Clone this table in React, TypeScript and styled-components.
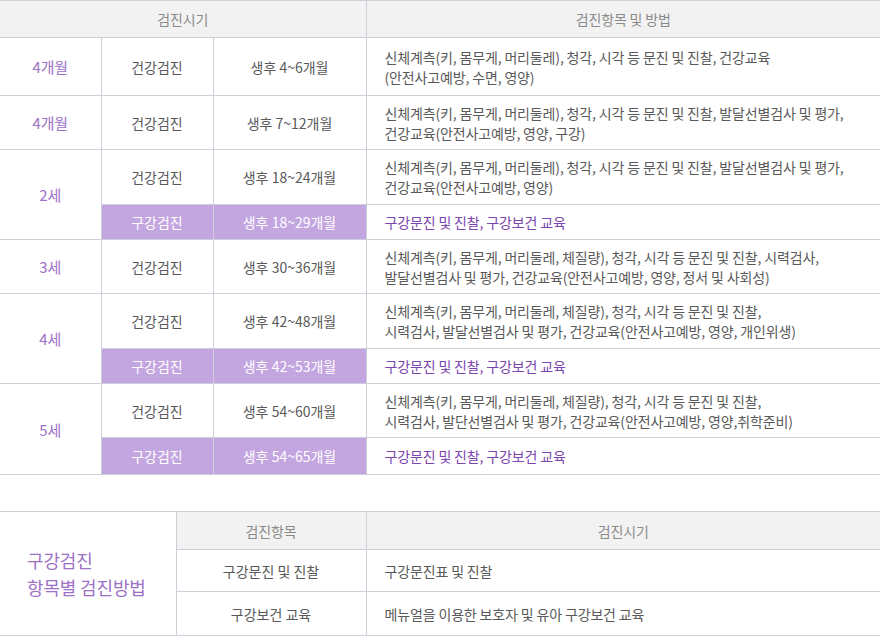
import React from 'react'
import styled, { createGlobalStyle } from 'styled-components'

const GlobalStyle = createGlobalStyle`
  html, body {
    margin: 0;
    padding: 0;
    background: #fff;
  }
  body {
    font-family: "Noto Sans CJK KR", "Noto Sans", sans-serif;
  }
`

const Page = styled.div`
  width: 880px;
  display: flex;
  flex-direction: column;
  gap: 36px;
`

const Table = styled.table`
  width: 100%;
  border-collapse: collapse;
  table-layout: fixed;
  font-size: 14px;
  letter-spacing: -0.15px;
  color: #595959;
  border-top: 1px solid #cfcfdb;
  border-bottom: 1px solid #cfcfdb;

  td, th {
    border: 1px solid #cfcfdb;
    padding: 0;
  }
  tr > :first-child {
    border-left: none;
  }
  tr > :last-child {
    border-right: none;
  }
`

const Head = styled.th<{ $h?: number }>`
  background: #f2f2f2;
  color: #8a8a8a;
  font-weight: 400;
  height: ${p => p.$h ?? 36}px;
  text-align: center;
`

const Row = styled.tr<{ $h: number }>`
  height: ${p => p.$h}px;
`

const Age = styled.td`
  color: #9d72c6;
  font-size: 15px;
  text-align: center;
`

const Cell = styled.td<{ $oral?: boolean }>`
  text-align: center;
  letter-spacing: 0;
  background: ${p => (p.$oral ? '#c3a5e0' : '#fff')};
  color: ${p => (p.$oral ? '#fff' : '#595959')};
`

const Desc = styled.td<{ $oral?: boolean }>`
  text-align: left;
  padding-left: 18px !important;
  line-height: 20px;
  color: ${p => (p.$oral ? '#7b45ae' : '#595959')};
`

const SideTitle = styled.td`
  color: #9d72c6;
  font-size: 18px;
  line-height: 27px;
  padding-left: 27px !important;
  text-align: left;
  vertical-align: middle;
`

type Health = { kind: string; period: string; desc: React.ReactNode; oral?: boolean; h: number }
type Group = { age: string; rows: Health[] }

const oralDesc = '구강문진 및 진찰, 구강보건 교육'

const groups: Group[] = [
  {
    age: '4개월',
    rows: [
      {
        kind: '건강검진', period: '생후 4~6개월', h: 58,
        desc: <>신체계측(키, 몸무게, 머리둘레), 청각, 시각 등 문진 및 진찰, 건강교육<br />(안전사고예방, 수면, 영양)</>,
      },
    ],
  },
  {
    age: '4개월',
    rows: [
      {
        kind: '건강검진', period: '생후 7~12개월', h: 54,
        desc: <>신체계측(키, 몸무게, 머리둘레), 청각, 시각 등 문진 및 진찰, 발달선별검사 및 평가,<br />건강교육(안전사고예방, 영양, 구강)</>,
      },
    ],
  },
  {
    age: '2세',
    rows: [
      {
        kind: '건강검진', period: '생후 18~24개월', h: 55,
        desc: <>신체계측(키, 몸무게, 머리둘레), 청각, 시각 등 문진 및 진찰, 발달선별검사 및 평가,<br />건강교육(안전사고예방, 영양)</>,
      },
      { kind: '구강검진', period: '생후 18~29개월', h: 35, oral: true, desc: oralDesc },
    ],
  },
  {
    age: '3세',
    rows: [
      {
        kind: '건강검진', period: '생후 30~36개월', h: 54,
        desc: <>신체계측(키, 몸무게, 머리둘레, 체질량), 청각, 시각 등 문진 및 진찰, 시력검사,<br />발달선별검사 및 평가, 건강교육(안전사고예방, 영양, 정서 및 사회성)</>,
      },
    ],
  },
  {
    age: '4세',
    rows: [
      {
        kind: '건강검진', period: '생후 42~48개월', h: 55,
        desc: <>신체계측(키, 몸무게, 머리둘레, 체질량), 청각, 시각 등 문진 및 진찰,<br />시력검사, 발달선별검사 및 평가, 건강교육(안전사고예방, 영양, 개인위생)</>,
      },
      { kind: '구강검진', period: '생후 42~53개월', h: 35, oral: true, desc: oralDesc },
    ],
  },
  {
    age: '5세',
    rows: [
      {
        kind: '건강검진', period: '생후 54~60개월', h: 54,
        desc: <>신체계측(키, 몸무게, 머리둘레, 체질량), 청각, 시각 등 문진 및 진찰,<br />시력검사, 발단선별검사 및 평가, 건강교육(안전사고예방, 영양,취학준비)</>,
      },
      { kind: '구강검진', period: '생후 54~65개월', h: 37, oral: true, desc: oralDesc },
    ],
  },
]

export default function App() {
  return (
    <>
      <GlobalStyle />
      <Page>
        <Table>
          <colgroup>
            <col style={{ width: 101 }} />
            <col style={{ width: 112 }} />
            <col style={{ width: 153 }} />
            <col />
          </colgroup>
          <thead>
            <tr>
              <Head colSpan={3}>검진시기</Head>
              <Head>검진항목 및 방법</Head>
            </tr>
          </thead>
          <tbody>
            {groups.map((g, gi) =>
              g.rows.map((r, ri) => (
                <Row key={`${gi}-${ri}`} $h={r.h}>
                  {ri === 0 && <Age rowSpan={g.rows.length}>{g.age}</Age>}
                  <Cell $oral={r.oral}>{r.kind}</Cell>
                  <Cell $oral={r.oral}>{r.period}</Cell>
                  <Desc $oral={r.oral}>{r.desc}</Desc>
                </Row>
              ))
            )}
          </tbody>
        </Table>

        <Table>
          <colgroup>
            <col style={{ width: 176 }} />
            <col style={{ width: 190 }} />
            <col />
          </colgroup>
          <tbody>
            <tr>
              <SideTitle rowSpan={3}>구강검진<br />항목별 검진방법</SideTitle>
              <Head $h={37}>검진항목</Head>
              <Head $h={37}>검진시기</Head>
            </tr>
            <Row $h={42}>
              <Cell>구강문진 및 진찰</Cell>
              <Desc>구강문진표 및 진찰</Desc>
            </Row>
            <Row $h={44}>
              <Cell>구강보건 교육</Cell>
              <Desc>메뉴얼을 이용한 보호자 및 유아 구강보건 교육</Desc>
            </Row>
          </tbody>
        </Table>
      </Page>
    </>
  )
}
